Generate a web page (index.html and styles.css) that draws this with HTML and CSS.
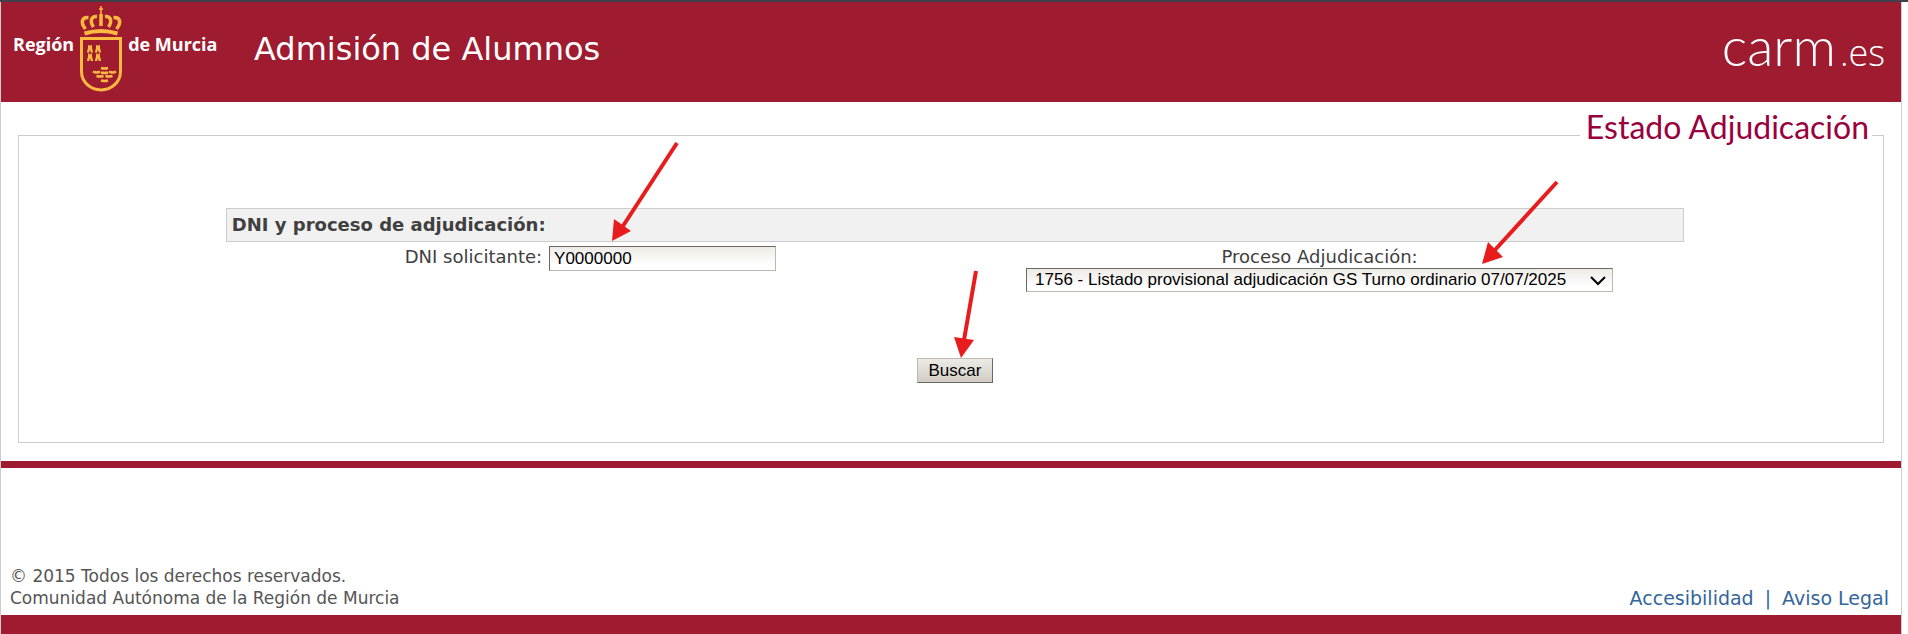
FILE: index.html
```
<!DOCTYPE html>
<html lang="es">
<head>
<meta charset="utf-8">
<title>Admisión de Alumnos</title>
<link rel="stylesheet" href="styles.css">
</head>
<body>
<div class="page">
  <header class="header">
    <div class="brand">
      <span>Región</span>
      <svg class="crest" width="44" height="88" viewBox="0 0 44 88" fill="none" stroke="#fdb940" aria-hidden="true">
        <path d="M22 0v20M20 3h4" stroke-width="1.500"/>
        <path d="M22 8v12" stroke-width="3.500"/>
        <path d="M6.500 23C1 16 3 11 9.500 11.500M14.500 21C10 14 13 10 18 10.500M37.500 23c5.500-7 3.500-12-3-11.500M29.500 21c4.500-7 1.500-11-3.500-10.500" stroke-width="3.500"/>
        <path d="M5.500 27.500q16.500-5 33 0" stroke-width="4"/>
        <path d="M2.500 32.500h39v33c0 10.500-9 18.500-19.500 18.500S2.500 76 2.500 65.500z" stroke-width="3"/>
        <g fill="#fdb940" stroke="none">
          <path id="tower" d="M9 39h1.500v1h1v-1H13v3l1.200 4.500h-2.400L11 43.500l-.8 3H7.800L9 42z"/>
          <use href="#tower" x="8"/>
          <use href="#tower" y="8.500"/>
          <use href="#tower" x="8" y="8.500"/>
        </g>
        <path d="M22 62q3.500 1 7 0M14 65.500q3.500 2 7 0M22 66.500q3.500 1 7 0M30 65.500q3.500 2 7 0M17.500 70q3.500 1 7 0M26.500 70q3.500 1 7 0M22 74.500q3.500 1 7 0" stroke-width="2.500"/>
      </svg>
      <span>de Murcia</span>
    </div>
    <h1 class="title">Admisión de Alumnos</h1>
    <div class="carm"><span>carm</span><span class="carm-tld">.es</span></div>
  </header>
  <main class="main">
    <fieldset class="panel">
      <legend class="legend">Estado Adjudicación</legend>
      <form class="form">
        <h2 class="section">DNI y proceso de adjudicación:</h2>
        <div class="fields">
          <div class="field">
            <label for="dni">DNI solicitante:</label>
            <span class="control">
              <input class="text" id="dni" type="text" value="Y0000000">
              <svg class="arrow arrow-dni" width="70" height="100" viewBox="0 0 70 100" aria-hidden="true"><path class="shaft" d="M67 1L13 84"/><path class="head" d="M2 99L4 77L21 89z"/></svg>
            </span>
          </div>
          <div class="field field-stacked">
            <label for="proceso">Proceso Adjudicación:</label>
            <span class="control">
              <select class="select" id="proceso"><option>1756 - Listado provisional adjudicación GS Turno ordinario 07/07/2025</option></select>
              <svg class="chevron" width="16" height="10" viewBox="0 0 16 10" aria-hidden="true"><path d="M1 1l7 7 7-7" fill="none" stroke="#000" stroke-width="2"/></svg>
              <svg class="arrow arrow-proceso" width="80" height="86" viewBox="0 0 80 86" aria-hidden="true"><path class="shaft" d="M77 2L14 71"/><path class="head" d="M2 84L8 62L23 77z"/></svg>
            </span>
          </div>
        </div>
        <div class="actions">
          <span class="control">
            <button class="button" type="button">Buscar</button>
            <svg class="arrow arrow-buscar" width="24" height="90" viewBox="0 0 24 90" aria-hidden="true"><path class="shaft" d="M22 1L10 70"/><path class="head" d="M7 88L0 67L20 70z"/></svg>
          </span>
        </div>
      </form>
    </fieldset>
  </main>
  <footer class="footer">
    <p class="copy">© 2015 Todos los derechos reservados.<br>Comunidad Autónoma de la Región de Murcia</p>
    <nav class="links"><a href="#accesibilidad">Accesibilidad</a><span>|</span><a href="#aviso">Aviso Legal</a></nav>
  </footer>
</div>
</body>
</html>
```
FILE: styles.css
```
* { box-sizing: border-box; }
body {
  margin: 0;
  border-top: 2px solid #40404a;
  font-family: Verdana, "DejaVu Sans", sans-serif;
  font-size: 18px;
  line-height: 22px;
  color: #404040;
  background: #fff;
}
.page {
  margin-right: 6px;
  border: solid #ccc;
  border-width: 0 1px;
}
.header {
  display: flex;
  align-items: flex-start;
  height: 100px;
  padding: 4px 16px 0 12px;
  background: #9e1b30;
  color: #fff;
}
.brand {
  display: flex;
  align-items: flex-start;
  gap: 5px;
  width: 241px;
  font: 700 18px/24px "Open Sans", sans-serif;
  white-space: nowrap;
}
.brand span { padding-top: 26px; }
.crest { flex: none; }
.title {
  flex: 1;
  margin: 0;
  padding-top: 23px;
  font-size: 32px;
  font-weight: 400;
  line-height: 40px;
}
.carm {
  display: flex;
  align-items: baseline;
  gap: 4px;
  padding-top: 10px;
  font: 300 54px/60px Lato, sans-serif;
}
.carm-tld { font: 300 36px/60px "Open Sans", sans-serif; }
.main { padding: 6px 17px 18px; }
.panel {
  min-width: 0;
  margin: 0;
  padding: 46px 5px 59px 13px;
  border: 1px solid #ccc;
}
.legend {
  margin: 0 6px 0 auto;
  padding: 0 3px 16px 6px;
  font: 400 32px/38px Lato, sans-serif;
  color: #99003d;
}
.form {
  width: 79%;
  margin: 0 auto;
}
.section {
  margin: 0;
  padding: 5px;
  border: 1px solid #ccc;
  background: #f1f1f1;
  font-size: 18px;
  line-height: 22px;
}
.fields {
  display: grid;
  grid-template-columns: 1fr 1fr;
  padding-top: 4px;
}
.field {
  display: flex;
  align-items: flex-start;
  justify-content: center;
  gap: 7px;
}
.field-stacked {
  flex-direction: column;
  align-items: center;
  justify-content: flex-start;
  gap: 0;
}
.control {
  position: relative;
  display: block;
}
.text, .select, .button {
  display: block;
  margin: 0;
  border: 1px solid;
  border-radius: 0;
  font: 17px/20px "Liberation Sans", Arial, sans-serif;
  color: #000;
}
.text {
  width: 227px;
  height: 25px;
  padding: 1px 4px;
  border-color: #6c6862 #bbb8b4 #bbb8b4 #6c6862;
  background: linear-gradient(#eeebe6, #fff 80%);
}
.select {
  appearance: none;
  height: 24px;
  padding: 0 45px 0 8px;
  border-color: #6c6862 #bbb8b4 #bbb8b4 #6c6862;
  background: linear-gradient(#eeebe6, #fff 80%);
}
.chevron {
  position: absolute;
  top: 8px;
  right: 7px;
  pointer-events: none;
}
.actions {
  display: flex;
  justify-content: center;
  padding-top: 66px;
}
.button {
  height: 25px;
  padding: 0 11px;
  border-color: #bbb8b4 #6c6862 #6c6862 #bbb8b4;
  background: linear-gradient(#eeebe7, #d2ccc4);
}
.arrow {
  position: absolute;
  overflow: visible;
  pointer-events: none;
}
.arrow-dni { left: 61px; top: -104px; }
.arrow-proceso { right: 53px; bottom: 26px; }
.arrow-buscar { left: 37px; bottom: 23px; }
.shaft { stroke: #e81c1c; stroke-width: 4; fill: none; }
.head { fill: #e81c1c; }
.footer {
  display: flex;
  align-items: flex-end;
  justify-content: space-between;
  padding: 97px 12px 6px 9px;
  border-top: 7px solid #9e1b30;
  border-bottom: 19px solid #9e1b30;
  color: #555;
}
.copy { margin: 0; font-size: 17px; }
.links {
  display: flex;
  gap: 11px;
  font-size: 19px;
  color: #336699;
}
.links a { color: #336699; text-decoration: none; }
```
